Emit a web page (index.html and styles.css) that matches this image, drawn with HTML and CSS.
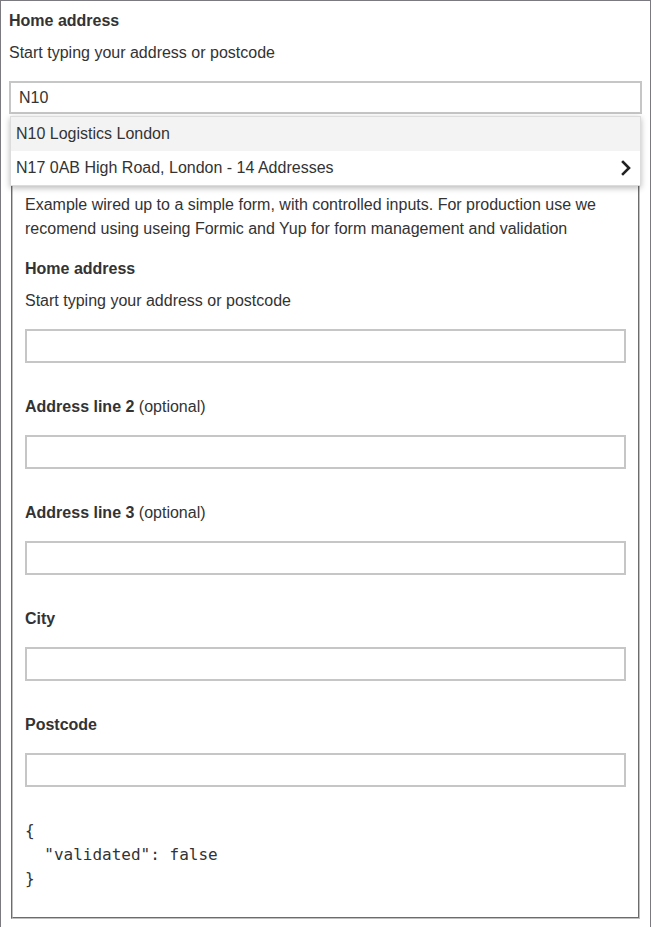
FILE: index.html
```html
<!DOCTYPE html>
<html lang="en">
<head>
<meta charset="utf-8">
<title>Address lookup</title>
<link rel="stylesheet" href="styles.css">
</head>
<body>
<div class="frame">
  <div class="lookup">
    <div class="label">Home address</div>
    <div class="hint">Start typing your address or postcode</div>
    <div class="combo">
      <input class="input" type="text" value="N10">
      <ul class="menu">
        <li class="option active">N10 Logistics London</li>
        <li class="option">N17 0AB High Road, London - 14 Addresses
          <svg class="chev" width="12" height="16" viewBox="0 0 12 16"><polyline points="3,2 9,8 3,14" fill="none" stroke="#222" stroke-width="2.6" stroke-linecap="square" stroke-linejoin="miter"/></svg>
        </li>
      </ul>
    </div>
  </div>
  <fieldset class="box">
    <p class="intro">Example wired up to a simple form, with controlled inputs. For production use we recomend using useing Formic and Yup for form management and validation</p>
    <div class="field">
      <div class="label">Home address</div>
      <div class="hint">Start typing your address or postcode</div>
      <input class="input" type="text">
    </div>
    <div class="field">
      <div class="label">Address line 2 <span class="opt">(optional)</span></div>
      <input class="input" type="text">
    </div>
    <div class="field">
      <div class="label">Address line 3 <span class="opt">(optional)</span></div>
      <input class="input" type="text">
    </div>
    <div class="field">
      <div class="label">City</div>
      <input class="input" type="text">
    </div>
    <div class="field last">
      <div class="label">Postcode</div>
      <input class="input" type="text">
    </div>
    <pre class="json">{
  "validated": false
}</pre>
  </fieldset>
</div>
</body>
</html>
```
FILE: styles.css
```css
html, body {
  margin: 0;
  padding: 0;
  background: #fff;
  overflow: hidden;
}
body {
  font-family: "Liberation Sans", Arial, sans-serif;
  font-size: 16px;
  color: #333;
}
.frame {
  border: 1px solid #7a7a80;
  padding: 9px 8px 24px;
}
.label {
  font-weight: bold;
  line-height: 22px;
}
.opt {
  font-weight: normal;
}
.hint {
  line-height: 22px;
  margin-top: 10px;
}
.combo {
  position: relative;
  margin-top: 17px;
}
.input {
  display: block;
  box-sizing: border-box;
  width: 100%;
  height: 34px;
  margin: 0;
  border: 2px solid #c6c6c6;
  padding: 0 8px;
  font-family: "Liberation Sans", Arial, sans-serif;
  font-size: 16px;
  color: #333;
  background: #fff;
  outline: none;
}
.combo .input {
  height: 33px;
}
.menu {
  position: absolute;
  left: 1px;
  right: 1px;
  top: 35px;
  margin: 0;
  padding: 0;
  list-style: none;
  background: #fff;
  border: 1px solid #dcdcdc;
  box-shadow: 0 2px 6px rgba(0, 0, 0, 0.28);
  z-index: 2;
}
.option {
  display: flex;
  align-items: center;
  justify-content: space-between;
  height: 34px;
  padding: 0 8px 0 5px;
  line-height: 34px;
}
.option.active {
  background: #f3f3f3;
}
.chev {
  display: block;
}
.box {
  margin: 55px 2px 0;
  border: 2px groove #c0c0c0;
  padding: 5.6px 12px 10px;
}
.intro {
  margin: 16px 0 17px;
  line-height: 24px;
}
.field {
  margin-bottom: 33px;
}
.field .input {
  margin-top: 17px;
}
.field.last {
  margin-bottom: 0;
}
.json {
  margin: 32px 0 16px;
  font-family: "DejaVu Sans Mono", monospace;
  font-size: 16px;
  line-height: 24px;
  color: #333;
}
```
